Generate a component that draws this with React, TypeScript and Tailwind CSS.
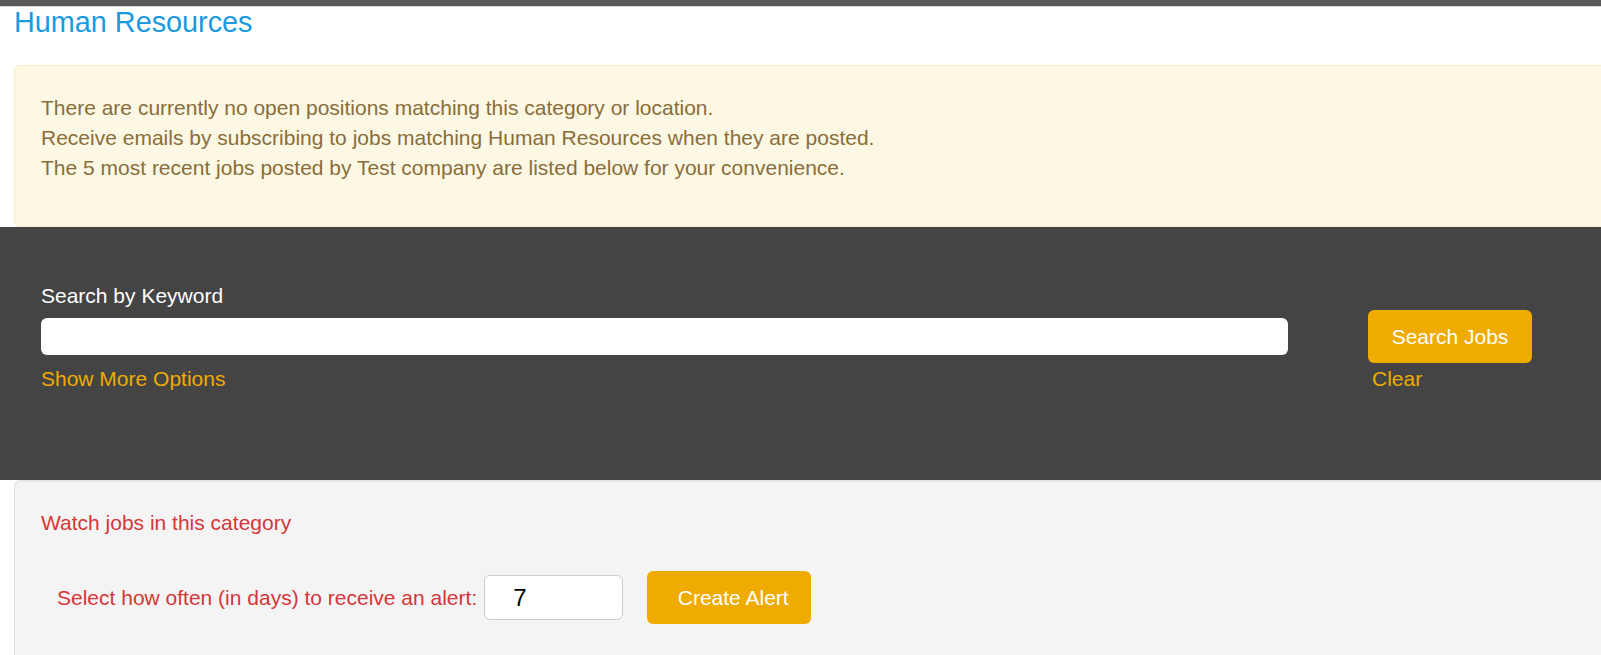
import React, { useState } from "react";

const orange = "bg-[#f0ab00]";

const JobCategory = () => {
  const [keyword, setKeyword] = useState<string>("");
  const [days, setDays] = useState<string>("7");

  return (
    <div className="h-screen overflow-hidden bg-white font-['Liberation_Sans',Arial,sans-serif]">
      {/* top strip */}
      <div className="h-[7px] bg-[#595959] border-b border-[#d4d4d4]"></div>

      <h1 className="pl-[14px] text-[28.8px] leading-[31px] text-[#1b9ae0] font-normal">
        Human Resources
      </h1>

      {/* no results notice */}
      <div className="mt-[27px] ml-[14px] -mr-[20px] border border-[#faebcc] rounded-[6px] bg-[#fcf8e3] pl-[26px] pt-[27px] pb-[43px] text-[21px] leading-[30px] text-[#8a6d3b]">
        <p>There are currently no open positions matching this category or location.</p>
        <p>Receive emails by subscribing to jobs matching Human Resources when they are posted.</p>
        <p>The 5 most recent jobs posted by Test company are listed below for your convenience.</p>
      </div>

      {/* search panel */}
      <div className="bg-[#444444] pl-[41px] pt-[54px] pb-[86px] text-[21px] leading-[30px]">
        <div className="flex gap-[80px]">
          <div className="w-[1247px] flex flex-col">
            <label className="text-white mb-[7px]">Search by Keyword</label>
            <input
              type="text"
              value={keyword}
              onChange={(e) => setKeyword(e.target.value)}
              className="h-[37px] w-full rounded-[6px] bg-white px-3 text-black outline-none"
            />
            <a href="#" className="mt-[9px] text-[#f0ab00] w-fit">Show More Options</a>
          </div>
          <div className="flex flex-col items-start">
            <div className="h-[29px]"></div>
            <button className={`${orange} h-[53px] w-[164px] rounded-[6px] text-white`}>
              Search Jobs
            </button>
            <a href="#" className="mt-[1px] ml-[4px] text-[#f0ab00]">Clear</a>
          </div>
        </div>
      </div>

      {/* alert well */}
      <div className="ml-[14px] -mr-[20px] border border-[#e3e3e3] rounded-[6px] bg-[#f4f4f4] shadow-[inset_0_1px_1px_rgba(0,0,0,0.05)] pl-[26px] pt-[27px] pb-[60px] text-[21px] leading-[30px] text-[#d63638]">
        <div>Watch jobs in this category</div>
        <div className="mt-[33px] pl-[16px] flex items-center">
          <label>Select how often (in days) to receive an alert:</label>
          <input
            type="text"
            value={days}
            onChange={(e) => setDays(e.target.value)}
            className="ml-[7px] h-[45px] w-[139px] rounded-[6px] border border-[#cccccc] bg-white pl-[28px] text-[24px] text-black outline-none"
          />
          <button className={`${orange} ml-[24px] h-[53px] w-[164px] rounded-[6px] pl-[8px] text-white`}>
            Create Alert
          </button>
        </div>
      </div>
    </div>
  );
};

export default JobCategory;
